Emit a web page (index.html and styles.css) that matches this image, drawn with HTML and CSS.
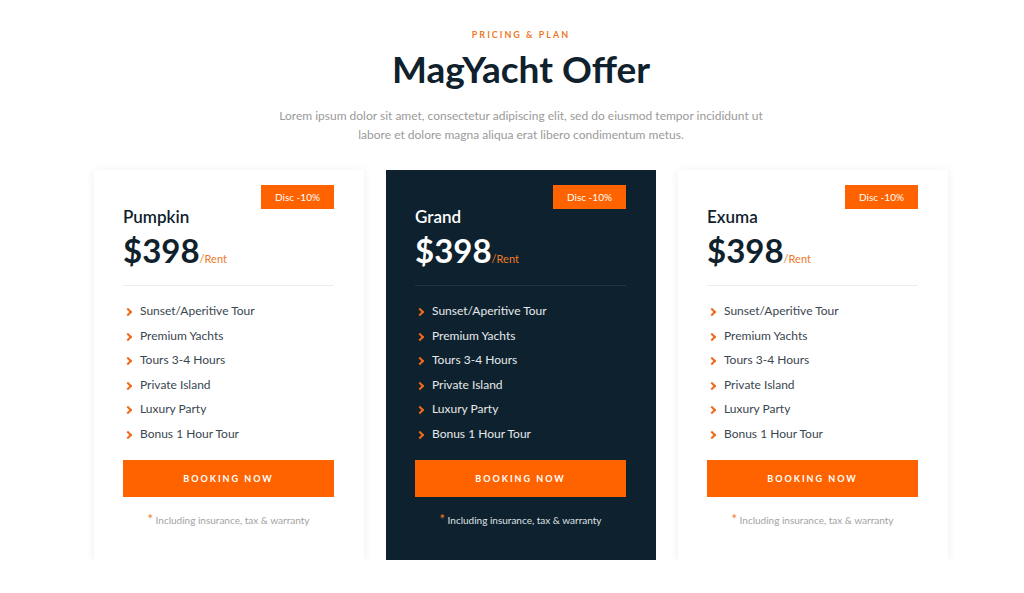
FILE: index.html
```html
<!DOCTYPE html>
<html lang="en">
<head>
    <meta charset="UTF-8">
    <meta name="viewport" content="width=device-width, initial-scale=1.0">
    <title>MagYacht Offer</title>
    <link rel="stylesheet" href="styles.css">
</head>
<body>
    <section class="pricing">
        <div class="pricing-head">
            <p class="eyebrow">PRICING &amp; PLAN</p>
            <h1>MagYacht Offer</h1>
            <p class="lead">Lorem ipsum dolor sit amet, consectetur adipiscing elit, sed do eiusmod tempor incididunt ut labore et dolore magna aliqua erat libero condimentum metus.</p>
        </div>

        <div class="plans">
            <div class="plan">
                <span class="disc">Disc -10%</span>
                <h2>Pumpkin</h2>
                <div class="price">$398<span>/Rent</span></div>
                <ul class="features">
                    <li>Sunset/Aperitive Tour</li>
                    <li>Premium Yachts</li>
                    <li>Tours 3-4 Hours</li>
                    <li>Private Island</li>
                    <li>Luxury Party</li>
                    <li>Bonus 1 Hour Tour</li>
                </ul>
                <a class="book-btn" href="#">BOOKING NOW</a>
                <p class="note"><span>*</span> Including insurance, tax &amp; warranty</p>
            </div>

            <div class="plan plan-dark">
                <span class="disc">Disc -10%</span>
                <h2>Grand</h2>
                <div class="price">$398<span>/Rent</span></div>
                <ul class="features">
                    <li>Sunset/Aperitive Tour</li>
                    <li>Premium Yachts</li>
                    <li>Tours 3-4 Hours</li>
                    <li>Private Island</li>
                    <li>Luxury Party</li>
                    <li>Bonus 1 Hour Tour</li>
                </ul>
                <a class="book-btn" href="#">BOOKING NOW</a>
                <p class="note"><span>*</span> Including insurance, tax &amp; warranty</p>
            </div>

            <div class="plan">
                <span class="disc">Disc -10%</span>
                <h2>Exuma</h2>
                <div class="price">$398<span>/Rent</span></div>
                <ul class="features">
                    <li>Sunset/Aperitive Tour</li>
                    <li>Premium Yachts</li>
                    <li>Tours 3-4 Hours</li>
                    <li>Private Island</li>
                    <li>Luxury Party</li>
                    <li>Bonus 1 Hour Tour</li>
                </ul>
                <a class="book-btn" href="#">BOOKING NOW</a>
                <p class="note"><span>*</span> Including insurance, tax &amp; warranty</p>
            </div>
        </div>
    </section>
</body>
</html>
```

FILE: styles.css
```css
body {
    margin: 0;
    background: #fff;
    font-family: 'Lato', 'Noto Sans', sans-serif;
    color: #0f212d;
}
.pricing {
    width: 854px;
    margin-left: 94px;
    padding-top: 29px;
}
.pricing-head {
    text-align: center;
}
.eyebrow {
    margin: 0;
    color: #ee7a2a;
    font-size: 9px;
    font-weight: 700;
    letter-spacing: 2px;
    line-height: 12px;
}
h1 {
    margin: 6px 0 0;
    font-size: 37px;
    font-weight: 700;
    line-height: 44px;
    color: #0f212d;
}
.lead {
    width: 500px;
    margin: 15px auto 0;
    color: #9a9a9a;
    font-size: 12px;
    line-height: 19px;
}
.plans {
    display: grid;
    grid-template-columns: repeat(3, 1fr);
    gap: 22px;
    margin-top: 26px;
}
.plan {
    position: relative;
    height: 390px;
    box-sizing: border-box;
    padding: 36px 30px 0 29px;
    background: #fff;
    box-shadow: 0 1px 10px rgba(0,0,0,0.07);
}
.plan-dark {
    background: #0e212e;
    color: #fff;
    box-shadow: none;
}
.disc {
    position: absolute;
    top: 15px;
    right: 30px;
    width: 73px;
    height: 24px;
    background: #ff6300;
    color: #fff;
    font-size: 10px;
    line-height: 24px;
    text-align: center;
}
h2 {
    margin: 0;
    font-size: 17px;
    font-weight: 600;
    line-height: 22px;
}
.price {
    margin-top: 2px;
    font-size: 33px;
    font-weight: 700;
    line-height: 40px;
}
.price span {
    color: #ee7a2a;
    font-size: 11px;
    font-weight: 400;
}
.features {
    list-style: none;
    margin: 6px 0 0;
    padding: 13px 0 0;
    border-top: 1px solid #ececec;
}
.plan-dark .features {
    border-top-color: #22343f;
}
.features li {
    position: relative;
    padding-left: 17px;
    font-size: 12px;
    line-height: 24.6px;
    color: #3a4650;
}
.plan-dark .features li {
    color: #e6e9eb;
}
.features li::before {
    content: '';
    position: absolute;
    left: 2px;
    top: 10px;
    width: 4px;
    height: 4px;
    border-top: 2px solid #ee6a1a;
    border-right: 2px solid #ee6a1a;
    transform: rotate(45deg);
}
.book-btn {
    display: block;
    margin-top: 13px;
    height: 37px;
    line-height: 37px;
    background: #ff6300;
    color: #fff;
    font-size: 9px;
    font-weight: 700;
    letter-spacing: 2px;
    text-align: center;
    text-decoration: none;
}
.note {
    margin: 14px 0 0;
    text-align: center;
    color: #a3a3a3;
    font-size: 10px;
}
.plan-dark .note {
    color: #dfe3e6;
}
.note span {
    color: #ee7a2a;
    font-size: 13px;
}
```
